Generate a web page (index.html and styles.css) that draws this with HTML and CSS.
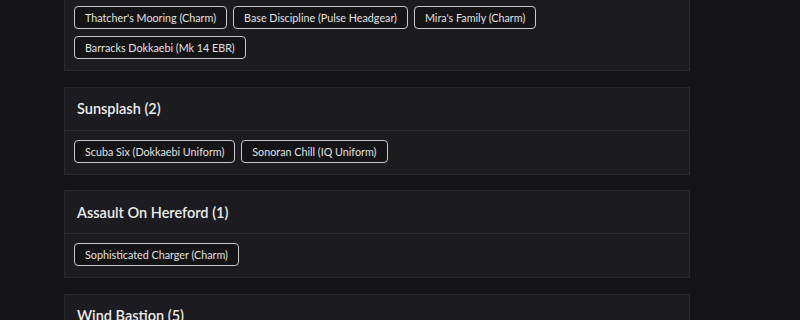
FILE: index.html
```html
<!DOCTYPE html>
<html lang="en">
<head>
	<meta charset="UTF-8">
	<title>Events</title>
	<link rel="stylesheet" href="styles.css">
</head>
<body>
	<div class="list">
		<div class="event">
			<div class="event-head">
				<h3>Void Edge (4)</h3>
			</div>
			<div class="event-items">
				<span class="item">Thatcher's Mooring (Charm)</span>
				<span class="item">Base Discipline (Pulse Headgear)</span>
				<span class="item">Mira's Family (Charm)</span>
				<span class="item">Barracks Dokkaebi (Mk 14 EBR)</span>
			</div>
		</div>
		<div class="event">
			<div class="event-head">
				<h3>Sunsplash (2)</h3>
			</div>
			<div class="event-items">
				<span class="item">Scuba Six (Dokkaebi Uniform)</span>
				<span class="item">Sonoran Chill (IQ Uniform)</span>
			</div>
		</div>
		<div class="event">
			<div class="event-head">
				<h3>Assault On Hereford (1)</h3>
			</div>
			<div class="event-items">
				<span class="item">Sophisticated Charger (Charm)</span>
			</div>
		</div>
		<div class="event">
			<div class="event-head">
				<h3>Wind Bastion (5)</h3>
			</div>
			<div class="event-items">
				<span class="item">Bastion Guard (Charm)</span>
			</div>
		</div>
	</div>
</body>
</html>
```

FILE: styles.css
```css
* {
	margin: 0;
	box-sizing: border-box;
}

body {
	background-color: #141316;
	font-family: Lato, "Open Sans", sans-serif;
	color: #e6e6e6;
	overflow: hidden;
}

.list {
	width: 626px;
	margin: -47px 0 0 64px;
	display: flex;
	flex-direction: column;
	gap: 15.5px;
}

.event {
	background-color: #1c1b1f;
	border: 1px solid #28272b;
}

.event-head {
	height: 43px;
	padding: 0 12px;
	display: flex;
	align-items: center;
	border-bottom: 1px solid #2a292d;
}

.event-head h3 {
	font-size: 14.5px;
	font-weight: 600;
	color: #ececec;
}

.event-items {
	display: flex;
	flex-wrap: wrap;
	gap: 7px 6px;
	padding: 9px 9px 11px;
}

.item {
	display: inline-block;
	height: 23px;
	line-height: 21px;
	padding: 0 10px;
	font-size: 10.75px;
	color: #e2e2e2;
	background-color: #141316;
	border: 1px solid #c9c9c9;
	border-radius: 4px;
}
```
